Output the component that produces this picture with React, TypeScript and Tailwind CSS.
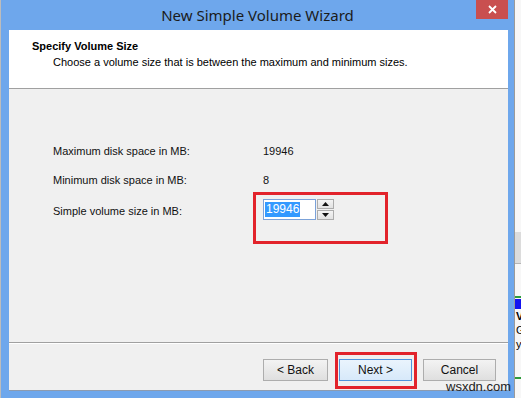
const ui = { fontFamily: '"Liberation Sans", Arial, sans-serif' };

function WizButton({ label, primary, width }: { label: string; primary?: boolean; width: string }) {
  return (
    <div
      className={
        "flex h-[22px] items-center justify-center border text-[12px] text-[#111] " +
        width +
        " " +
        (primary
          ? "border-[#4f93dc] bg-gradient-to-b from-[#eaf4fd] to-[#d7e9fa]"
          : "border-[#adadad] bg-gradient-to-b from-[#f3f3f3] to-[#dfdfdf]")
      }
    >
      {label}
    </div>
  );
}

function Spinner() {
  return (
    <div className="flex h-[21px] items-stretch">
      <div className="flex w-[53px] items-center border border-[#7ba2d9] bg-white pl-[1px]">
        <span className="bg-[#3399ff] px-[1px] text-[12px] leading-[15px] text-white">19946</span>
      </div>
      <div className="ml-[1px] flex w-[17px] flex-col gap-[1px]">
        <div className="flex flex-1 items-center justify-center border border-[#acacac] bg-gradient-to-b from-[#f4f4f4] to-[#e2e2e2]">
          <svg width="7" height="4" viewBox="0 0 7 4">
            <path d="M0 4 L3.5 0 L7 4 Z" fill="#111" />
          </svg>
        </div>
        <div className="flex flex-1 items-center justify-center border border-[#acacac] bg-gradient-to-b from-[#f4f4f4] to-[#e2e2e2]">
          <svg width="7" height="4" viewBox="0 0 7 4">
            <path d="M0 0 L7 0 L3.5 4 Z" fill="#111" />
          </svg>
        </div>
      </div>
    </div>
  );
}

export default function App() {
  return (
    <div className="relative flex h-[398px] w-[521px] overflow-hidden bg-[#f2f2f2]" style={ui}>
      {/* sliver of the desktop on the left */}
      <div className="w-[1px] bg-[#bcbcbc]" />

      {/* wizard window */}
      <div className="flex w-[513px] flex-col bg-[#6ea7ec]">
        <div className="relative flex h-[30px] items-center justify-center">
          <span
            className="text-[15px] text-[#1b1b1b]"
            style={{ fontFamily: '"Noto Sans", "Open Sans", sans-serif' }}
          >
            New Simple Volume Wizard
          </span>
          <div className="absolute right-[6px] top-0 flex h-[19px] w-[32px] items-center justify-center bg-[#c94f4f]">
            <svg width="9" height="9" viewBox="0 0 9 9">
              <path d="M1 1 L8 8 M8 1 L1 8" stroke="#fff" strokeWidth="1.8" />
            </svg>
          </div>
        </div>

        <div className="ml-[8px] mr-[6px] flex h-[361px] flex-col border-b border-[#8c9bb0]">
          {/* header */}
          <div className="flex h-[59px] flex-col border-b border-[#a0a0a0] bg-white pl-[23px] pt-[9px]">
            <div className="text-[11px] font-bold leading-[14px] text-black">Specify Volume Size</div>
            <div className="mt-[2px] pl-[21px] text-[11px] leading-[14px] text-black">
              Choose a volume size that is between the maximum and minimum sizes.
            </div>
          </div>

          {/* body */}
          <div className="flex flex-1 flex-col border-b border-[#a0a0a0] bg-[#f0f0f0] pl-[44px] pt-[56px] text-[11px] text-[#111]">
            <div className="grid grid-cols-[210px_auto] items-center gap-y-[16px]">
              <div className="leading-[13px]">Maximum disk space in MB:</div>
              <div className="leading-[13px]">19946</div>
              <div className="leading-[13px]">Minimum disk space in MB:</div>
              <div className="leading-[13px]">8</div>
              <div className="leading-[13px]">Simple volume size in MB:</div>
              <div className="-mt-[4px]">
                <Spinner />
              </div>
            </div>
          </div>

          {/* footer */}
          <div className="flex h-[47px] items-start border-t border-white bg-[#f0f0f0] pt-[15px]">
            <div className="ml-[254px] flex">
              <WizButton label="< Back" width="w-[65px]" />
              <div className="ml-[11px]">
                <WizButton label="Next >" width="w-[73px]" primary />
              </div>
              <div className="ml-[11px]">
                <WizButton label="Cancel" width="w-[73px]" />
              </div>
            </div>
          </div>
        </div>
      </div>

      {/* another window peeking out on the right */}
      <div className="flex w-[7px] flex-col overflow-hidden border-l border-[#9a9a9a] bg-[#f7f7f7]">
        <div className="h-[232px] shrink-0" />
        <div className="h-[32px] shrink-0 border-b border-[#b5b5b5] bg-[#dcdcdc]" />
        <div className="h-[32px] shrink-0" />
        <div className="h-[2px] shrink-0 bg-[#2e9b3a]" />
        <div className="mt-[1px] h-[10px] shrink-0 bg-[#1313f0]" />
        <div className="pl-[1px] text-[11px] font-bold leading-[14px] text-black">V</div>
        <div className="pl-[1px] text-[11px] leading-[14px] text-black">G</div>
        <div className="pl-[1px] text-[11px] leading-[14px] text-black">y</div>
        <div className="mt-[26px] h-[2px] shrink-0 bg-[#2e9b3a]" />
      </div>

      {/* red highlight frames */}
      <div className="absolute left-[253px] top-[192px] h-[52px] w-[135px] border-[3px] border-[#e2232b]" />
      <div className="absolute left-[335px] top-[352px] h-[37px] w-[82px] border-[3px] border-[#e2232b]" />

      {/* watermark */}
      <div className="absolute left-[446px] top-[379px] text-[13px] leading-[15px] text-[#222]">wsxdn.com</div>
    </div>
  );
}
